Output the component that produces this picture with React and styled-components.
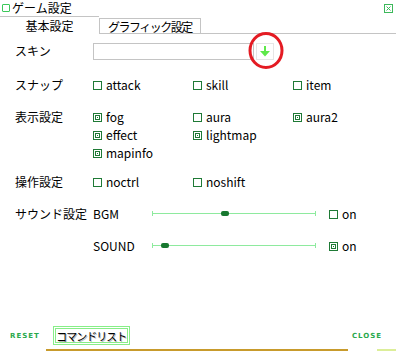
import React from "react";
import styled, { createGlobalStyle } from "styled-components";

const GlobalStyle = createGlobalStyle`
  body {
    margin: 0;
    background: #fff;
    font-family: "Noto Sans CJK JP", "Noto Sans", sans-serif;
    color: #000;
  }
  * { box-sizing: border-box; }
`;

const Panel = styled.div`
  position: relative;
  width: 396px;
  height: 351px;
  display: flex;
  flex-direction: column;
  overflow: hidden;
  background: #fff;
`;

const TitleBar = styled.div`
  display: flex;
  align-items: center;
  height: 16px;
  padding: 0 3px 0 2px;
  font-size: 12px;
  line-height: 16px;
`;

const TitleCheck = styled.span`
  width: 8px;
  height: 8px;
  border: 1px solid #3cc85a;
  border-radius: 1px;
  margin-right: 2px;
`;

const CloseIcon = styled.svg`
  margin-left: auto;
  display: block;
`;

const TabBar = styled.div`
  display: flex;
  height: 18px;
  font-size: 12px;
  white-space: nowrap;
`;

const Tab = styled.div`
  display: flex;
  align-items: center;
  justify-content: center;
  width: ${(p) => p.$width}px;
  border-top: 1px solid #c4c4c4;
  ${(p) =>
    p.$active
      ? `height: 18px;`
      : `margin-top: 2px; height: 16px; border: 1px solid #c4c4c4; letter-spacing: -1.5px;`}
`;

const TabFill = styled.div`
  flex: 1;
  border-bottom: 1px solid #c4c4c4;
`;

const Form = styled.div`
  display: flex;
  flex-direction: column;
  padding-left: 15px;
`;

const Row = styled.div`
  display: grid;
  grid-template-columns: 78px 1fr;
  align-items: ${(p) => (p.$center ? "center" : "start")};
  margin-top: ${(p) => p.$top}px;
  font-size: 12px;
  line-height: 18px;
`;

const Label = styled.div`
  white-space: nowrap;
`;

const SkinLine = styled.div`
  display: flex;
  align-items: center;
`;

const SkinInput = styled.div`
  width: 161px;
  height: 17px;
  border: 1px solid #c4c4c4;
`;

const PickButton = styled.div`
  display: flex;
  align-items: center;
  justify-content: center;
  width: 18px;
  height: 17px;
  margin-left: 2px;
  border: 1px solid #e6e6e6;
`;

const CheckGrid = styled.div`
  display: grid;
  grid-template-columns: repeat(3, 100px);
  grid-auto-rows: 18px;
`;

const CheckItem = styled.div`
  display: flex;
  align-items: center;
  gap: 4px;
  white-space: nowrap;
`;

const Box = styled.svg`
  display: block;
  flex: none;
  shape-rendering: crispEdges;
`;

const SoundList = styled.div`
  display: flex;
  flex-direction: column;
  gap: 14px;
`;

const SoundLine = styled.div`
  display: flex;
  align-items: center;
  height: 18px;
`;

const SubLabel = styled.div`
  width: 59px;
`;

const Slider = styled.div`
  position: relative;
  width: 164px;
  height: 18px;
  margin-right: 13px;
  &::before {
    content: "";
    position: absolute;
    left: 0;
    right: 0;
    top: 8px;
    height: 1px;
    background: #8eea9e;
  }
  &::after {
    content: "";
    position: absolute;
    left: 0;
    right: 0;
    top: 6px;
    height: 5px;
    border-left: 1px solid #8eea9e;
    border-right: 1px solid #8eea9e;
  }
`;

const Knob = styled.span`
  position: absolute;
  top: 6px;
  width: 8px;
  height: 5px;
  border-radius: 2px;
  background: #17782f;
  z-index: 1;
`;

const Footer = styled.div`
  display: flex;
  align-items: center;
  height: 19px;
  margin-top: auto;
  padding: 0 14px 0 10px;
`;

const SmallLink = styled.div`
  font-family: "DejaVu Sans", sans-serif;
  font-size: 7px;
  font-weight: bold;
  letter-spacing: 1px;
  color: #2aa84c;
  ${(p) => p.$right && "margin-left: auto;"}
`;

const CommandButton = styled.div`
  display: flex;
  align-items: center;
  justify-content: center;
  width: 77px;
  height: 19px;
  margin-left: 13px;
  border: 3px double #88ee88;
  font-size: 11px;
  letter-spacing: -1px;
  white-space: nowrap;
  text-shadow: 1px 1px 0 #b8b8b8;
`;

const Strip = styled.div`
  display: flex;
  height: 2px;
  margin-top: 4px;
`;

const StripPart = styled.div`
  width: ${(p) => p.$w}px;
  margin-left: ${(p) => p.$ml}px;
  background: ${(p) => p.$bg};
`;

const Annotation = styled.svg`
  position: absolute;
  left: 247px;
  top: 31px;
  pointer-events: none;
`;

const GREEN = "#1f7a36";

function Check({ checked, label }) {
  return (
    <CheckItem>
      <Box width="9" height="9" viewBox="0 0 9 9">
        <rect x="0.5" y="0.5" width="8" height="8" fill="#fff" stroke={GREEN} />
        {checked && (
          <>
            <rect x="2.5" y="2.5" width="4" height="4" rx="1" fill="none" stroke={GREEN} />
            <rect x="4" y="4" width="1" height="1" fill={GREEN} />
          </>
        )}
      </Box>
      {label}
    </CheckItem>
  );
}

function Volume({ name, value, on }) {
  return (
    <SoundLine>
      <SubLabel>{name}</SubLabel>
      <Slider>
        <Knob style={{ left: `${Math.round(value * 156)}px` }} />
      </Slider>
      <Check checked={on} label="on" />
    </SoundLine>
  );
}

export default function App() {
  return (
    <>
      <GlobalStyle />
      <Panel>
        <TitleBar>
          <TitleCheck />
          ゲーム設定
          <CloseIcon width="9" height="9" viewBox="0 0 9 9">
            <rect x="0.5" y="0.5" width="8" height="8" fill="none" stroke="#3cb85a" />
            <path d="M2.5 2.5 L6.5 6.5 M6.5 2.5 L2.5 6.5" stroke="#3cb85a" strokeWidth="1" />
          </CloseIcon>
        </TitleBar>

        <TabBar>
          <Tab $active $width={99}>基本設定</Tab>
          <Tab $width={102}>グラフィック設定</Tab>
          <TabFill />
        </TabBar>

        <Form>
          <Row $top={8} $center>
            <Label>スキン</Label>
            <SkinLine>
              <SkinInput />
              <PickButton>
                <svg width="10" height="11" viewBox="0 0 10 11">
                  <rect x="4" y="0" width="2" height="6" fill="#5ee84a" />
                  <polygon points="0,5 10,5 5,10.5" fill="#5ee84a" />
                </svg>
              </PickButton>
            </SkinLine>
          </Row>

          <Row $top={16}>
            <Label>スナップ</Label>
            <CheckGrid>
              <Check label="attack" />
              <Check label="skill" />
              <Check label="item" />
            </CheckGrid>
          </Row>

          <Row $top={14}>
            <Label>表示設定</Label>
            <CheckGrid>
              <Check checked label="fog" />
              <Check label="aura" />
              <Check checked label="aura2" />
              <Check checked label="effect" />
              <Check checked label="lightmap" />
              <span />
              <Check checked label="mapinfo" />
            </CheckGrid>
          </Row>

          <Row $top={11}>
            <Label>操作設定</Label>
            <CheckGrid>
              <Check label="noctrl" />
              <Check label="noshift" />
            </CheckGrid>
          </Row>

          <Row $top={14}>
            <Label>サウンド設定</Label>
            <SoundList>
              <Volume name="BGM" value={0.44} />
              <Volume name="SOUND" value={0.06} on />
            </SoundList>
          </Row>
        </Form>

        <Footer>
          <SmallLink>RESET</SmallLink>
          <CommandButton>コマンドリスト</CommandButton>
          <SmallLink $right>CLOSE</SmallLink>
        </Footer>
        <Strip>
          <StripPart $ml={46} $w={302} $bg="#c89b2c" />
          <StripPart $ml={29} $w={19} $bg="#dcee99" />
        </Strip>

        <Annotation width="38" height="40" viewBox="0 0 38 40">
          <ellipse cx="19" cy="19.5" rx="16" ry="17" fill="none" stroke="#e41b23" strokeWidth="3" />
        </Annotation>
      </Panel>
    </>
  );
}
